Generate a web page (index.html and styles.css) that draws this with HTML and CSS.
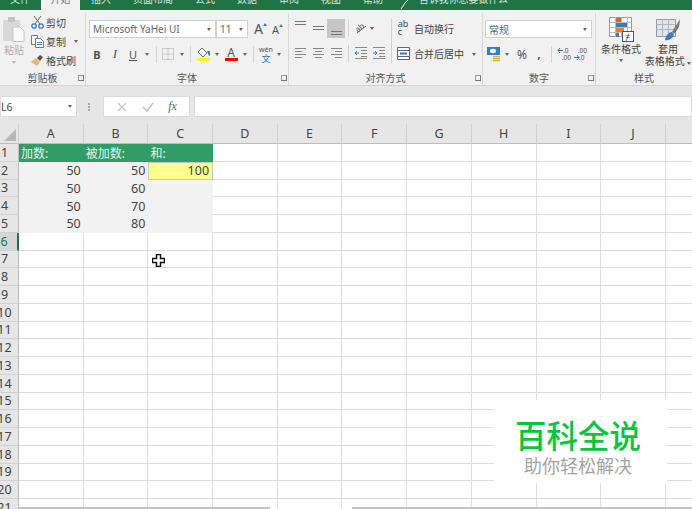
FILE: index.html
```html
<!DOCTYPE html>
<html lang="zh-CN">
<head>
    <meta charset="UTF-8">
    <meta name="viewport" content="width=device-width, initial-scale=1.0">
    <title>Excel</title>
    <link rel="stylesheet" href="styles.css">
</head>
<body>
    <!-- TABS -->
    <nav class="tabs">
        <span class="tab first">文件</span>
        <span class="tab active">开始</span>
        <span class="tab">插入</span>
        <span class="tab">页面布局</span>
        <span class="tab">公式</span>
        <span class="tab">数据</span>
        <span class="tab">审阅</span>
        <span class="tab">视图</span>
        <span class="tab">帮助</span>
        <svg class="lamp" width="10" height="10" viewBox="0 0 10 10"><path d="M1 9l4-6M5 3l3-3" stroke="#fff" fill="none"/></svg>
        <span class="tell">告诉我你想要做什么</span>
    </nav>

    <!-- RIBBON -->
    <div class="ribbon">
        <section class="group clipboard">
            <div class="group-body clip-body">
                <div class="paste">
                    <svg width="22" height="25" viewBox="0 0 22 25">
                        <rect x="0" y="3" width="17" height="21" rx="1" fill="#d8d8d8"/>
                        <rect x="5" y="0" width="7" height="5" rx="1" fill="#c2c2c2"/>
                        <path d="M10 10h7l4 4v10.500h-11z" fill="#fafafa" stroke="#c4c4c4"/>
                    </svg>
                    <span class="paste-text">粘贴</span>
                    <i class="caret light"></i>
                </div>
                <div class="clip-list">
                    <div class="clip-row">
                        <svg width="13" height="13" viewBox="0 0 13 13">
                            <path d="M3 0l6 8M10 0l-6 8" stroke="#666" fill="none"/>
                            <circle cx="3" cy="10" r="2.200" fill="none" stroke="#3a7cc2" stroke-width="1.300"/>
                            <circle cx="10" cy="10" r="2.200" fill="none" stroke="#3a7cc2" stroke-width="1.300"/>
                        </svg>
                        <span>剪切</span>
                    </div>
                    <div class="clip-row">
                        <svg width="13" height="13" viewBox="0 0 13 13">
                            <path d="M.5.500h6v9h-6z" fill="#fff" stroke="#777"/>
                            <path d="M4.500 3.500h5l3 3v6h-8z" fill="#fff" stroke="#777"/>
                            <path d="M6 7.500h5M6 9.500h5" stroke="#3a7cc2"/>
                        </svg>
                        <span>复制</span>
                        <i class="caret copy-caret"></i>
                    </div>
                    <div class="clip-row">
                        <svg width="13" height="13" viewBox="0 0 13 13">
                            <path d="M0 8l5-4 4 4-3 4z" fill="#e3bb6b"/>
                            <path d="M6 4l3-3 3 2-3 4z" fill="#555"/>
                        </svg>
                        <span>格式刷</span>
                    </div>
                </div>
            </div>
            <div class="group-label">剪贴板<i class="launcher"></i></div>
        </section>

        <section class="group font">
            <div class="group-body font-body">
                <div class="font-top">
                    <div class="combo font-name">Microsoft YaHei UI<i class="caret"></i></div>
                    <div class="combo font-size">11<i class="caret"></i></div>
                    <span class="grow big">A<i class="up"></i></span>
                    <span class="grow small">A<i class="up"></i></span>
                </div>
                <div class="font-tools">
                    <b class="tool-b">B</b>
                    <i class="tool-i">I</i>
                    <u class="tool-u">U</u>
                    <i class="caret"></i>
                    <i class="vsep"></i>
                    <svg width="12" height="12" viewBox="0 0 12 12"><path d="M.5.500h11v11h-11zM6 .5v11M.5 6h11" fill="none" stroke="#a8a8a8" stroke-dasharray="1 1"/></svg>
                    <i class="caret"></i>
                    <i class="vsep"></i>
                    <div class="colored">
                        <svg width="13" height="10" viewBox="0 0 13 10"><path d="M5 0l5 5-4 4-5-5z" fill="#fff" stroke="#666"/><path d="M10 3a2.500 2.500 0 0 1 2 5z" fill="#3a7cc2"/></svg>
                        <i class="bar yellow"></i>
                    </div>
                    <i class="caret"></i>
                    <div class="colored">
                        <span class="letter">A</span>
                        <i class="bar red"></i>
                    </div>
                    <i class="caret"></i>
                    <i class="vsep"></i>
                    <div class="phonetic"><span>wén</span><span class="wen">文</span></div>
                    <i class="caret"></i>
                </div>
            </div>
            <div class="group-label">字体<i class="launcher"></i></div>
        </section>

        <section class="group align">
            <div class="group-body align-body">
                <svg width="13" height="18" viewBox="0 0 13 18"><path d="M1 2.500h11M1 5.500h11" stroke="#777"/></svg>
                <svg width="13" height="18" viewBox="0 0 13 18"><path d="M1 7.500h11M1 10.500h11" stroke="#777"/></svg>
                <div class="selected"><svg width="13" height="18" viewBox="0 0 13 18"><path d="M1 12.500h11M1 15.500h11" stroke="#777"/></svg></div>
                <i class="vsep"></i>
                <svg width="14" height="14" viewBox="0 0 14 14">
                    <text x="1" y="10" font-size="8" fill="#555" transform="rotate(-40 5 7)">ab</text>
                    <path d="M3 12l9-7" stroke="#666" fill="none"/>
                </svg>
                <i class="caret caret-start"></i>
                <i class="vsep tall"></i>
                <div class="wrap-icon"><span>ab</span><span>c</span></div>
                <div class="text-tool">自动换行</div>

                <svg width="13" height="12" viewBox="0 0 13 12"><path d="M1 1.500h11M1 4.500h7M1 7.500h11M1 10.500h7" stroke="#888"/></svg>
                <svg width="13" height="12" viewBox="0 0 13 12"><path d="M1 1.500h11M3 4.500h7M1 7.500h11M3 10.500h7" stroke="#888"/></svg>
                <svg width="13" height="12" viewBox="0 0 13 12"><path d="M1 1.500h11M5 4.500h7M1 7.500h11M5 10.500h7" stroke="#888"/></svg>
                <i class="vsep"></i>
                <svg width="14" height="12" viewBox="0 0 14 12"><path d="M1 .5h12M7 3.500h6M7 6.500h6M7 9.500h6M1 11.500h12" stroke="#888"/><path d="M5 6H1M3 4L1 6l2 2" stroke="#2f74c0" fill="none"/></svg>
                <svg width="14" height="12" viewBox="0 0 14 12"><path d="M1 .5h12M7 3.500h6M7 6.500h6M7 9.500h6M1 11.500h12" stroke="#888"/><path d="M1 6h4M3 4l2 2-2 2" stroke="#2f74c0" fill="none"/></svg>
                <svg width="13" height="13" viewBox="0 0 13 13"><path d="M.5.500h12v12h-12zM.5 3.500h12M.5 9.500h12" fill="#fff" stroke="#666"/><path d="M3 6.500h7" stroke="#2f74c0" stroke-width="2"/></svg>
                <div class="text-tool">合并后居中<i class="caret merge-caret"></i></div>
            </div>
            <div class="group-label">对齐方式<i class="launcher"></i></div>
        </section>

        <section class="group number">
            <div class="group-body number-body">
                <div class="combo number-format">常规<i class="caret"></i></div>
                <div class="number-tools">
                    <svg width="15" height="15" viewBox="0 0 15 15">
                        <rect x="0" y="0" width="13" height="8" fill="#3a7cc2"/>
                        <ellipse cx="6" cy="4" rx="3" ry="2.200" fill="#fff"/>
                        <path d="M6 9.500h7M6 11.500h7M6 13.500h7" stroke="#e0b050" stroke-width="1.300"/>
                    </svg>
                    <i class="caret"></i>
                    <span class="percent">%</span>
                    <span class="comma">,</span>
                    <i class="vsep"></i>
                    <div class="decimal">
                        <svg width="12" height="7" viewBox="0 0 12 7"><path d="M6 3.500H1M3 1L1 3.500 3 6" stroke="#2f74c0" fill="none"/></svg>
                        <span class="dec-top">.0</span>
                        <span class="dec-bottom">.00</span>
                    </div>
                    <div class="decimal">
                        <span class="dec-plain">.00</span>
                        <svg width="12" height="7" viewBox="0 0 12 7"><path d="M1 3.500h5M4 1l2 2.500L4 6" stroke="#2f74c0" fill="none"/></svg>
                        <span class="dec-top">.0</span>
                    </div>
                </div>
            </div>
            <div class="group-label">数字<i class="launcher"></i></div>
        </section>

        <section class="group styles">
            <div class="group-body styles-body">
                <div class="style-col first-col">
                    <svg width="25" height="25" viewBox="0 0 25 25">
                        <path d="M.5.500h22v19h-22z" fill="#fff" stroke="#999"/>
                        <path d="M.5 5.500h22M.5 10.500h22M.5 15.500h22M6.500 0v20M12.500 0v20M18.500 0v20" stroke="#bbb"/>
                        <rect x="7" y="1" width="5" height="4" fill="#d9643a"/>
                        <rect x="7" y="6" width="11" height="4" fill="#3a7cc2"/>
                        <rect x="7" y="11" width="8" height="4" fill="#e08030"/>
                        <rect x="7" y="16" width="3" height="4" fill="#3a7cc2"/>
                        <rect x="13.500" y="14.500" width="11" height="10" fill="#fff" stroke="#555"/>
                        <text x="16" y="23" font-size="9" fill="#333">≠</text>
                    </svg>
                    <span>条件格式</span>
                    <i class="caret"></i>
                </div>
                <div class="style-col">
                    <svg width="25" height="25" viewBox="0 0 25 25">
                        <path d="M.5 2.500h19v17h-19z" fill="#dde6f0" stroke="#999"/>
                        <path d="M.5 7.500h19M.5 12.500h19M6.500 2v18M12.500 2v18" stroke="#b5b5b5"/>
                        <path d="M16 15l8-13-1 8-5 7z" fill="#777"/>
                        <path d="M9 23c1-5 4-8 7-8l2 3c-1 3-5 6-9 5z" fill="#3a7cc2"/>
                    </svg>
                    <span>套用</span>
                    <span>表格格式 <i class="caret"></i></span>
                </div>
            </div>
            <div class="group-label">样式</div>
        </section>
    </div>

    <!-- FORMULA BAR -->
    <div class="formula-area">
        <div class="name-box">L6<i class="caret"></i></div>
        <div class="grip"></div>
        <div class="fx-box">
            <svg width="12" height="12" viewBox="0 0 12 12"><path d="M2 2l8 8M10 2l-8 8" stroke="#c4c4c4" stroke-width="1.300"/></svg>
            <svg width="12" height="12" viewBox="0 0 12 12"><path d="M1 6l4 4 6-8" stroke="#c4c4c4" stroke-width="1.500" fill="none"/></svg>
            <em>fx</em>
        </div>
        <div class="formula-input"></div>
    </div>

    <!-- SHEET -->
    <main class="sheet-wrap">
        <div id="sheet" class="sheet"></div>
        <svg class="cursor" width="13" height="13" viewBox="0 0 13 13">
            <path d="M4.500.5h4v4h4v4h-4v4h-4v-4h-4v-4h4z" fill="#fff" stroke="#111" stroke-width="1.500"/>
        </svg>
        <div class="watermark">
            <strong>百科全说</strong>
            <span>助你轻松解决</span>
        </div>
        <div class="scroll-tabs"></div>
        <div class="scroll-bar"></div>
    </main>

    <script src="script.js"></script>
</body>
</html>
```

FILE: styles.css
```css
* {
    box-sizing: border-box;
}
body {
    margin: 0;
    width: 692px;
    height: 509px;
    overflow: hidden;
    font-family: "Noto Sans", "Noto Sans CJK SC", sans-serif;
    font-size: 10px;
    color: #444;
    background: #fff;
}
i {
    font-style: normal;
}

/* tabs */
.tabs {
    display: flex;
    height: 10px;
    background: #217346;
    color: #d5e6db;
    overflow: hidden;
}
.tab {
    padding: 0 11px;
    line-height: 10px;
    margin-top: -6px;
    height: 16px;
    white-space: nowrap;
}
.tab.first {
    margin-left: -1px;
}
.tab.active {
    padding: 0 9.5px;
    background: #f1f1f1;
    color: #777;
}
.lamp {
    margin: 0 0 0 6px;
}
.tell {
    margin: -6px 0 0 9px;
    line-height: 10px;
    font-size: 9.900px;
}

/* ribbon */
.ribbon {
    display: flex;
    height: 76px;
    padding-top: 3px;
    background: #f1f1f1;
    border-bottom: 1px solid #d4d4d4;
    overflow: hidden;
}
.group {
    display: flex;
    flex-direction: column;
    border-right: 1px solid #d8d8d8;
    flex: none;
}
.group-body {
    flex: 1;
}
.group-label {
    position: relative;
    height: 15px;
    line-height: 16px;
    text-align: center;
    color: #555;
}
.launcher {
    position: absolute;
    right: 1px;
    top: 5px;
    width: 6px;
    height: 6px;
    border-left: 1px solid #999;
    border-top: 1px solid #999;
    border-right: 1px solid #777;
    border-bottom: 1px solid #777;
}
.clipboard {
    width: 86px;
}
.font {
    width: 203px;
}
.align {
    width: 194px;
}
.number {
    width: 113px;
}
.styles {
    flex: 1;
    border-right: none;
}
.caret {
    display: inline-block;
    width: 0;
    height: 0;
    border-left: 2.500px solid transparent;
    border-right: 2.500px solid transparent;
    border-top: 3px solid #666;
}
.caret.light {
    border-top-color: #b4b4b4;
}
.vsep {
    display: block;
    width: 1px;
    height: 17px;
    background: #d2d2d2;
}

/* clipboard */
.clip-body {
    display: flex;
}
.paste {
    display: flex;
    flex-direction: column;
    align-items: center;
    width: 26px;
    margin-left: 1px;
    padding-top: 4px;
}
.paste-text {
    margin-top: 1px;
    line-height: 14px;
    color: #b0b0b0;
}
.paste .caret {
    margin-top: 4px;
}
.clip-list {
    margin-left: 4px;
}
.clip-row {
    display: flex;
    align-items: center;
    height: 19px;
    gap: 2px;
    white-space: nowrap;
}
.copy-caret {
    margin-left: 6px;
}

/* font */
.font-body {
    padding: 7px 0 0 2px;
}
.font-top {
    display: flex;
    align-items: center;
    margin-left: 1px;
}
.combo {
    display: flex;
    align-items: center;
    justify-content: space-between;
    height: 18px;
    padding: 0 4px 0 3px;
    background: #fff;
    border: 1px solid #d0d0d0;
    color: #666;
    white-space: nowrap;
}
.font-name {
    width: 127px;
}
.font-size {
    width: 32px;
    margin-right: 6px;
}
.grow {
    display: flex;
    align-items: flex-start;
    color: #555;
    line-height: 16px;
}
.grow.big {
    font-size: 14px;
    width: 18px;
}
.grow.small {
    font-size: 11px;
    width: 12px;
    padding-top: 2px;
}
.up {
    width: 0;
    height: 0;
    margin-top: 2px;
    border-left: 2px solid transparent;
    border-right: 2px solid transparent;
    border-bottom: 3px solid #3a7cc2;
}
.font-tools {
    display: grid;
    grid-template-columns: 18px 18px 18px 10px 8px 16px 12px 4px 22px 6px 22px 6px 10px 16px 10px;
    justify-items: center;
    align-items: center;
    height: 18px;
    margin: 7px 0 0 0;
    font-size: 11px;
    color: #555;
}
.tool-i {
    font-family: "Liberation Serif", serif;
    font-style: italic;
    font-size: 13px;
}
.colored {
    display: flex;
    flex-direction: column;
    align-items: center;
    width: 13px;
}
.letter {
    font-size: 12px;
    line-height: 11px;
}
.bar {
    display: block;
    width: 13px;
    height: 3px;
}
.bar.yellow {
    background: #ffff00;
}
.bar.red {
    background: #ff0000;
}
.phonetic {
    display: flex;
    flex-direction: column;
    align-items: center;
    font-size: 7px;
    line-height: 8px;
}
.wen {
    font-size: 9px;
    line-height: 9px;
    color: #2f74c0;
}

/* alignment */
.align-body {
    display: grid;
    grid-template-columns: 18px 18px 18px 6px 19px 18px 6px 18px 1fr;
    grid-template-rows: 18px 18px;
    row-gap: 7px;
    justify-items: center;
    align-items: center;
    padding: 6px 0 0 2px;
}
.selected {
    display: flex;
    justify-content: center;
    width: 18px;
    height: 19px;
    background: #c6c6c6;
}
.caret-start {
    justify-self: start;
}
.vsep.tall {
    grid-row: span 2;
    height: 44px;
}
.wrap-icon {
    display: flex;
    flex-direction: column;
    font-size: 9px;
    line-height: 8px;
}
.text-tool {
    justify-self: start;
    white-space: nowrap;
    font-size: 10px;
    margin-left: 2px;
}
.merge-caret {
    margin-left: 8px;
    vertical-align: middle;
}

/* number */
.number-body {
    padding: 7px 0 0 2px;
}
.number-format {
    width: 107px;
}
.number-tools {
    display: grid;
    grid-template-columns: 18px 8px 22px 12px 12px 14px 18px;
    justify-items: center;
    align-items: center;
    height: 18px;
    margin-top: 7px;
    font-size: 12px;
    color: #555;
}
.comma {
    font-weight: bold;
    line-height: 10px;
}
.decimal {
    display: grid;
    grid-template-columns: 6px 8px;
    grid-auto-rows: 7px;
    font-size: 6.500px;
    line-height: 7px;
}
.decimal svg {
    grid-column: 1;
}
.dec-top {
    grid-column: 2;
}
.dec-bottom {
    grid-column: 1 / span 2;
    justify-self: end;
}
.dec-plain {
    grid-column: 1 / span 2;
    justify-self: end;
}

/* styles */
.styles-body {
    display: flex;
}
.style-col {
    display: flex;
    flex-direction: column;
    align-items: center;
    width: 44px;
    padding-top: 4px;
    line-height: 12px;
    white-space: nowrap;
}
.style-col.first-col {
    width: 50px;
}
.style-col svg {
    margin-bottom: 1px;
}
.style-col > .caret {
    margin-top: 4px;
}

/* formula bar */
.formula-area {
    display: flex;
    height: 38px;
    padding-top: 10px;
    background: #e6e6e6;
}
.name-box, .fx-box, .formula-input {
    height: 21px;
    background: #fff;
    border: 1px solid #dcdcdc;
}
.name-box {
    display: flex;
    align-items: center;
    justify-content: space-between;
    width: 77px;
    padding: 0 4px 0 0;
    font-size: 10.500px;
}
.grip {
    width: 2px;
    height: 8px;
    margin: 7px 13px 0 11px;
    border-left: 2px dotted #aaa;
}
.fx-box {
    display: flex;
    align-items: center;
    justify-content: space-around;
    width: 87px;
    padding: 0 5px;
}
.fx-box em {
    font-family: "Liberation Serif", serif;
    font-size: 12px;
    color: #666;
}
.formula-input {
    flex: 1;
    margin-left: 4px;
}

/* sheet */
.sheet-wrap {
    position: relative;
    height: 385px;
    overflow: hidden;
}
.sheet {
    display: grid;
    grid-template-columns: 19px repeat(11, 64.700px);
    grid-template-rows: 20px;
    grid-auto-rows: 17.750px;
    background: #fff;
}
.cell {
    display: flex;
    align-items: center;
    justify-content: flex-end;
    padding-right: 3px;
    border-right: 1px solid #dedede;
    border-bottom: 1px solid #dedede;
    font-size: 12.500px;
    color: #444;
    white-space: nowrap;
}
.col-head, .corner {
    justify-content: center;
    padding-right: 0;
    background: #e6e6e6;
    border-right: 1px solid #d0d0d0;
    border-bottom: 1px solid #bdbdbd;
    font-size: 12.500px;
}
.corner {
    align-items: flex-end;
    justify-content: flex-end;
    padding: 0 2px 2px 0;
}
.tri {
    width: 0;
    height: 0;
    border-left: 12px solid transparent;
    border-bottom: 12px solid #b8b8b8;
}
.row-head {
    justify-content: center;
    padding-right: 9px;
    background: #e6e6e6;
    border-right: 1px solid #bdbdbd;
    border-bottom: 1px solid #d0d0d0;
}
.row-head.current {
    background: #d6d6d6;
    color: #217346;
    border-right: 2px solid #217346;
}
.cell.title {
    justify-content: flex-start;
    padding: 0 0 0 2px;
    background: #329c68;
    border: none;
    font-size: 12px;
    color: #e6f3ec;
}
.cell.soft {
    background: #f2f2f2;
    border: none;
}
.cell.sum {
    background: #ffff8f;
    border: 1px solid #c8c8c8;
}
.cursor {
    position: absolute;
    left: 152px;
    top: 130px;
}
.watermark {
    position: absolute;
    left: 494px;
    top: 276px;
    display: flex;
    flex-direction: column;
    align-items: center;
    width: 173px;
    height: 83px;
    padding: 14px 5px 0 0;
    background: #fff;
}
.watermark strong {
    font-family: "Noto Sans CJK SC", sans-serif;
    font-size: 31.500px;
    font-weight: 500;
    line-height: 40px;
    color: #06c640;
}
.watermark span {
    font-family: "Noto Sans CJK SC", sans-serif;
    font-size: 18px;
    line-height: 22px;
    color: #a3a3a3;
}
.scroll-tabs, .scroll-bar {
    position: absolute;
    bottom: 0;
    height: 2px;
    background: #c4c4c4;
}
.scroll-tabs {
    left: 18px;
    width: 252px;
}
.scroll-bar {
    left: 352px;
    right: 0;
}
```

FILE: script.js
```js
// Sheet contents
const COLS = ["A", "B", "C", "D", "E", "F", "G", "H", "I", "J", "K"];
const ROWS = 21;
const data = {
    A1: "加数:", B1: "被加数:", C1: "和:",
    A2: 50, B2: 50, C2: 100,
    A3: 50, B3: 60,
    A4: 50, B4: 70,
    A5: 50, B5: 80
};

function addCell(sheet, text, className) {
    const cell = document.createElement("div");
    cell.className = "cell " + className;
    cell.textContent = text;
    sheet.appendChild(cell);
    return cell;
}

function cellClass(col, row) {
    if (col > 2 || row > 5) return "";
    if (row === 1) return "title";
    if (col === 2 && row === 2) return "sum";
    return "soft";
}

// Build headers and rows
function buildSheet() {
    const sheet = document.getElementById("sheet");
    addCell(sheet, "", "corner").innerHTML = '<i class="tri"></i>';
    COLS.forEach(c => addCell(sheet, c, "col-head"));
    for (let row = 1; row <= ROWS; row++) {
        addCell(sheet, row, row === 6 ? "row-head current" : "row-head");
        COLS.forEach((c, col) => addCell(sheet, data[c + row] ?? "", cellClass(col, row)));
    }
}

buildSheet();
```
